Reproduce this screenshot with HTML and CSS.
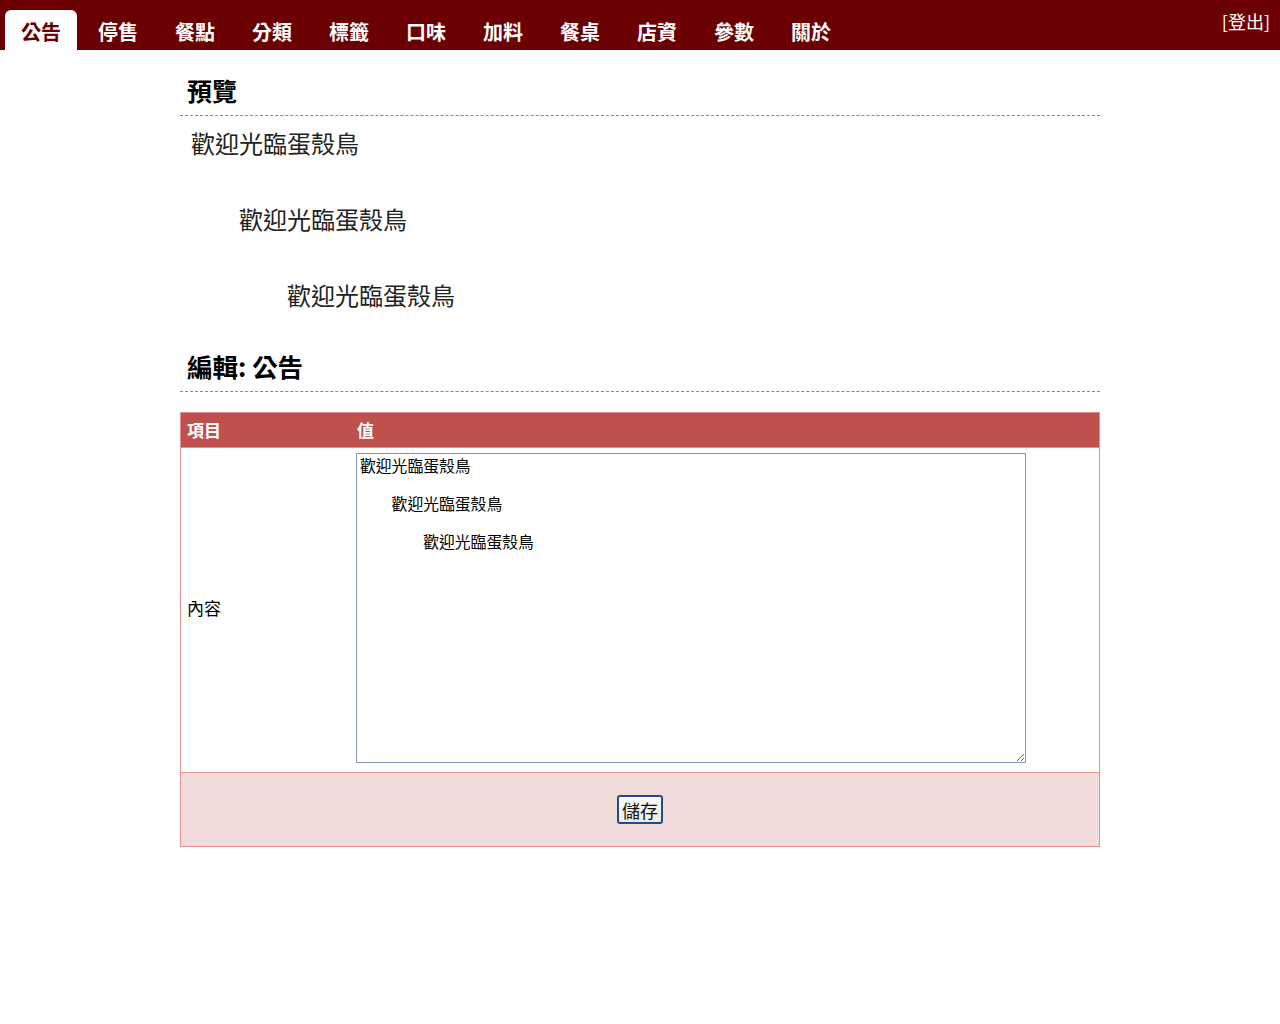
FILE: index.html
```html
<!DOCTYPE html>
<html lang="zh-Hant">
<head>
<meta charset="utf-8">
<title>公告</title>
<link rel="stylesheet" href="styles.css">
</head>
<body>
<header class="topbar">
  <nav class="tabs">
    <a class="tab active">公告</a>
    <a class="tab">停售</a>
    <a class="tab">餐點</a>
    <a class="tab">分類</a>
    <a class="tab">標籤</a>
    <a class="tab">口味</a>
    <a class="tab">加料</a>
    <a class="tab">餐桌</a>
    <a class="tab">店資</a>
    <a class="tab">參數</a>
    <a class="tab">關於</a>
  </nav>
  <a class="logout">[登出]</a>
</header>
<main class="container">
  <h2 class="section-title">預覽</h2>
  <div class="preview">
    <p class="pv l0">歡迎光臨蛋殼鳥</p>
    <p class="pv l1">歡迎光臨蛋殼鳥</p>
    <p class="pv l2">歡迎光臨蛋殼鳥</p>
  </div>
  <h2 class="section-title edit">編輯: 公告</h2>
  <table class="form">
    <thead>
      <tr><th class="c1">項目</th><th>值</th></tr>
    </thead>
    <tbody>
      <tr>
        <td class="c1">內容</td>
        <td><textarea class="content">歡迎光臨蛋殼鳥

　　歡迎光臨蛋殼鳥

　　　　歡迎光臨蛋殼鳥</textarea></td>
      </tr>
    </tbody>
    <tfoot>
      <tr><td colspan="2" class="actions"><button class="save">儲存</button></td></tr>
    </tfoot>
  </table>
</main>
</body>
</html>
```
FILE: styles.css
```css
html, body {
  margin: 0;
  padding: 0;
  background: #fff;
  font-family: "Noto Sans CJK TC", "Noto Sans", sans-serif;
  color: #000;
}
.topbar {
  height: 50px;
  background: #6a0000;
  display: flex;
  justify-content: space-between;
  align-items: flex-start;
}
.tabs {
  display: flex;
  gap: 5px;
  padding-left: 5px;
  padding-top: 10px;
}
.tab {
  width: 72px;
  height: 40px;
  box-sizing: border-box;
  display: flex;
  align-items: center;
  justify-content: center;
  font-size: 20px;
  font-weight: bold;
  color: #fff;
  border-radius: 6px 6px 0 0;
  line-height: 1;
  padding-top: 4px;
}
.tab.active {
  background: #fff;
  color: #6a0000;
}
.logout {
  color: #fff;
  font-size: 18px;
  line-height: 1;
  padding: 12px 10px 0 0;
}
.container {
  width: 920px;
  margin: 0 auto;
}
.section-title {
  margin: 0;
  font-size: 25px;
  font-weight: bold;
  line-height: 1;
  padding: 28px 7px 12px;
  border-bottom: 1px dashed #888;
}
.section-title.edit {
  font-size: 25.5px;
}
.preview {
  padding-top: 15px;
}
.pv {
  margin: 0;
  font-size: 24px;
  line-height: 1;
  color: #222;
  height: 76px;
}
.pv.l0 { padding-left: 11px; }
.pv.l1 { padding-left: 59px; }
.pv.l2 { padding-left: 107px; height: 42px; }
.form {
  margin-top: 20px;
  width: 920px;
  border-collapse: collapse;
  border: 1px solid #e0908e;
}
.form th {
  background: #c0504d;
  color: #fff;
  font-size: 17px;
  font-weight: bold;
  text-align: left;
  height: 34px;
  padding: 0 6px;
  border-bottom: 1px solid #e0908e;
}
.form th.c1, .form td.c1 {
  width: 158px;
}
.form td {
  padding: 5px 6px 9px 5px;
  font-size: 17px;
  vertical-align: middle;
}
.form td.c1 {
  padding-left: 6px;
}
.content {
  display: block;
  width: 670px;
  height: 310px;
  box-sizing: border-box;
  border: 1px solid #7f9db9;
  padding: 2px 3px;
  font-family: "Noto Sans CJK TC", sans-serif;
  font-size: 15.8px;
  line-height: 19px;
  color: #000;
  margin: 0;
}
.actions {
  background: #f2dcdb;
  border-top: 1px solid #e0908e;
  text-align: center;
  height: 73px;
  padding: 0 !important;
}
.save {
  font-family: "Noto Sans CJK TC", sans-serif;
  font-size: 18px;
  line-height: 1;
  padding: 4px 3px;
  height: 29px;
  border: 2px solid #1d4e85;
  border-radius: 3px;
  background: linear-gradient(#fcfcfb, #ebeae2);
  color: #111;
}
```
